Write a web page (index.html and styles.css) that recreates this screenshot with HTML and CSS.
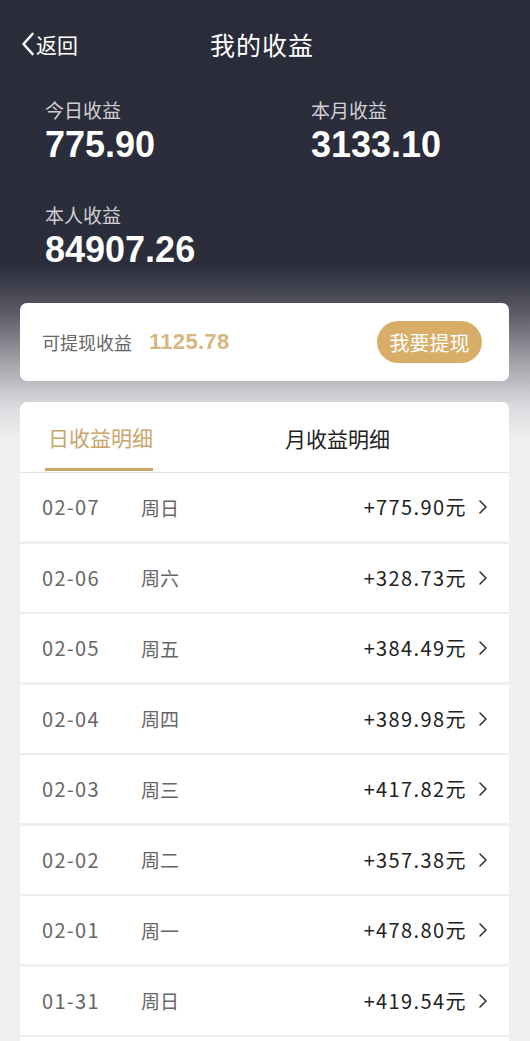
FILE: index.html
```html
<!DOCTYPE html>
<html lang="zh-CN">
<head>
<meta charset="utf-8">
<title>我的收益</title>
<link rel="stylesheet" href="styles.css">
</head>
<body>
<div class="page">
  <header class="nav">
    <div class="back">
      <svg class="back-icon" width="14" height="24" viewBox="0 0 14 24"><path d="M11.5 2 L2.5 12 L11.5 22" fill="none" stroke="#fff" stroke-width="2.6" stroke-linecap="round" stroke-linejoin="round"/></svg>
      <span>返回</span>
    </div>
    <h1 class="title">我的收益</h1>
    <div></div>
  </header>

  <section class="stats">
    <div class="stat">
      <div class="stat-label">今日收益</div>
      <div class="stat-value">775.90</div>
    </div>
    <div class="stat">
      <div class="stat-label">本月收益</div>
      <div class="stat-value">3133.10</div>
    </div>
    <div class="stat">
      <div class="stat-label">本人收益</div>
      <div class="stat-value">84907.26</div>
    </div>
  </section>

  <section class="withdraw">
    <span class="w-label">可提现收益</span>
    <span class="w-amount">1125.78</span>
    <button class="w-btn">我要提现</button>
  </section>

  <section class="detail">
    <div class="tabs">
      <div class="tab active">日收益明细</div>
      <div class="tab">月收益明细</div>
    </div>
    <ul class="rows">
      <li class="row"><span class="date">02-07</span><span class="week">周日</span><span class="amount">+775.90元</span><svg class="chev" width="10" height="16" viewBox="0 0 10 16"><path d="M2 2 L8 8 L2 14" fill="none" stroke="#333" stroke-width="1.6" stroke-linecap="round" stroke-linejoin="round"/></svg></li>
      <li class="row"><span class="date">02-06</span><span class="week">周六</span><span class="amount">+328.73元</span><svg class="chev" width="10" height="16" viewBox="0 0 10 16"><path d="M2 2 L8 8 L2 14" fill="none" stroke="#333" stroke-width="1.6" stroke-linecap="round" stroke-linejoin="round"/></svg></li>
      <li class="row"><span class="date">02-05</span><span class="week">周五</span><span class="amount">+384.49元</span><svg class="chev" width="10" height="16" viewBox="0 0 10 16"><path d="M2 2 L8 8 L2 14" fill="none" stroke="#333" stroke-width="1.6" stroke-linecap="round" stroke-linejoin="round"/></svg></li>
      <li class="row"><span class="date">02-04</span><span class="week">周四</span><span class="amount">+389.98元</span><svg class="chev" width="10" height="16" viewBox="0 0 10 16"><path d="M2 2 L8 8 L2 14" fill="none" stroke="#333" stroke-width="1.6" stroke-linecap="round" stroke-linejoin="round"/></svg></li>
      <li class="row"><span class="date">02-03</span><span class="week">周三</span><span class="amount">+417.82元</span><svg class="chev" width="10" height="16" viewBox="0 0 10 16"><path d="M2 2 L8 8 L2 14" fill="none" stroke="#333" stroke-width="1.6" stroke-linecap="round" stroke-linejoin="round"/></svg></li>
      <li class="row"><span class="date">02-02</span><span class="week">周二</span><span class="amount">+357.38元</span><svg class="chev" width="10" height="16" viewBox="0 0 10 16"><path d="M2 2 L8 8 L2 14" fill="none" stroke="#333" stroke-width="1.6" stroke-linecap="round" stroke-linejoin="round"/></svg></li>
      <li class="row"><span class="date">02-01</span><span class="week">周一</span><span class="amount">+478.80元</span><svg class="chev" width="10" height="16" viewBox="0 0 10 16"><path d="M2 2 L8 8 L2 14" fill="none" stroke="#333" stroke-width="1.6" stroke-linecap="round" stroke-linejoin="round"/></svg></li>
      <li class="row"><span class="date">01-31</span><span class="week">周日</span><span class="amount">+419.54元</span><svg class="chev" width="10" height="16" viewBox="0 0 10 16"><path d="M2 2 L8 8 L2 14" fill="none" stroke="#333" stroke-width="1.6" stroke-linecap="round" stroke-linejoin="round"/></svg></li>
      <li class="row row-empty"></li>
    </ul>
  </section>
</div>
</body>
</html>
```

FILE: styles.css
```css
* { box-sizing: border-box; }
html, body {
  margin: 0;
  padding: 0;
}
body {
  width: 530px;
  height: 1041px;
  overflow: hidden;
  background: #f0f0f2;
  font-family: "Liberation Sans", "Noto Sans CJK SC", sans-serif;
}
.page {
  height: 1041px;
  overflow: hidden;
  background: linear-gradient(to bottom,
    #2b2c3a 0px,
    #2c2d3b 265px,
    #5a5b66 313px,
    #a3a3aa 363px,
    #dcdce0 408px,
    #f0f0f2 443px,
    #f0f0f2 100%);
}
.nav {
  height: 88px;
  display: grid;
  grid-template-columns: 1fr auto 1fr;
  align-items: center;
  color: #fff;
}
.back {
  display: flex;
  align-items: center;
  padding-left: 21px;
  font-size: 21px;
  font-family: "Noto Sans CJK SC", sans-serif;
  gap: 1px;
}
.back-icon { display: block; }
.title {
  margin: 0 0 0 -6px;
  font-size: 25px;
  font-weight: 400;
  letter-spacing: 1px;
  font-family: "Noto Sans CJK SC", sans-serif;
}
.stats {
  display: grid;
  grid-template-columns: 266px 1fr;
  row-gap: 38px;
  padding: 10px 0 0 45px;
}
.stat-label {
  font-family: "Noto Sans CJK SC", sans-serif;
  font-size: 19px;
  line-height: 24px;
  color: #cfcfd5;
}
.stat-value {
  margin-top: 3px;
  font-size: 36px;
  font-weight: 700;
  line-height: 40px;
  color: #fff;
}
.withdraw {
  margin: 33px 21px 0 20px;
  height: 78px;
  background: #fff;
  border-radius: 7px;
  display: flex;
  align-items: center;
  padding: 0 27px 0 22px;
}
.w-label {
  font-family: "Noto Sans CJK SC", sans-serif;
  font-size: 18px;
  color: #666;
}
.w-amount {
  margin-left: 17px;
  font-size: 22px;
  font-weight: 700;
  color: #d6b67e;
  letter-spacing: 0.3px;
}
.w-btn {
  margin-left: auto;
  width: 105px;
  height: 42px;
  border: none;
  border-radius: 21px;
  background: #d8ad68;
  color: #fff;
  font-family: "Noto Sans CJK SC", sans-serif;
  font-size: 20px;
  padding: 0;
}
.detail {
  margin: 21px 21px 0 20px;
}
.tabs {
  height: 71px;
  background: #fff;
  border-radius: 7px 7px 0 0;
  border-bottom: 1px solid #e6e6e8;
  display: flex;
  align-items: stretch;
  padding-left: 25px;
}
.tab {
  font-family: "Noto Sans CJK SC", sans-serif;
  font-size: 21px;
  color: #222;
  display: flex;
  align-items: center;
  white-space: nowrap;
  padding-top: 1px;
}
.tab.active {
  color: #c9a56c;
  width: 108px;
  padding-left: 3px;
  border-bottom: 3px solid #c9a56c;
  margin-bottom: 1px;
  padding-top: 4px;
}
.tab + .tab {
  margin-left: 132px;
}
.rows {
  list-style: none;
  margin: 0;
  padding: 0;
  display: flex;
  flex-direction: column;
  gap: 2.5px;
}
.row {
  height: 68px;
  flex: none;
  background: #fff;
  display: flex;
  align-items: center;
  padding: 0 21px 0 22px;
  box-shadow: 0 0 1px rgba(0,0,0,0.06);
  font-family: "Noto Sans CJK SC", sans-serif;
  line-height: 1;
}
.date {
  width: 99px;
  font-size: 20px;
  letter-spacing: 1.3px;
  color: #666;
}
.week {
  font-size: 19px;
  color: #666;
}
.amount {
  margin-left: auto;
  font-size: 20px;
  letter-spacing: 1.4px;
  margin-right: -1px;
  color: #222;
}
.chev {
  margin-left: 12px;
  display: block;
}
```
